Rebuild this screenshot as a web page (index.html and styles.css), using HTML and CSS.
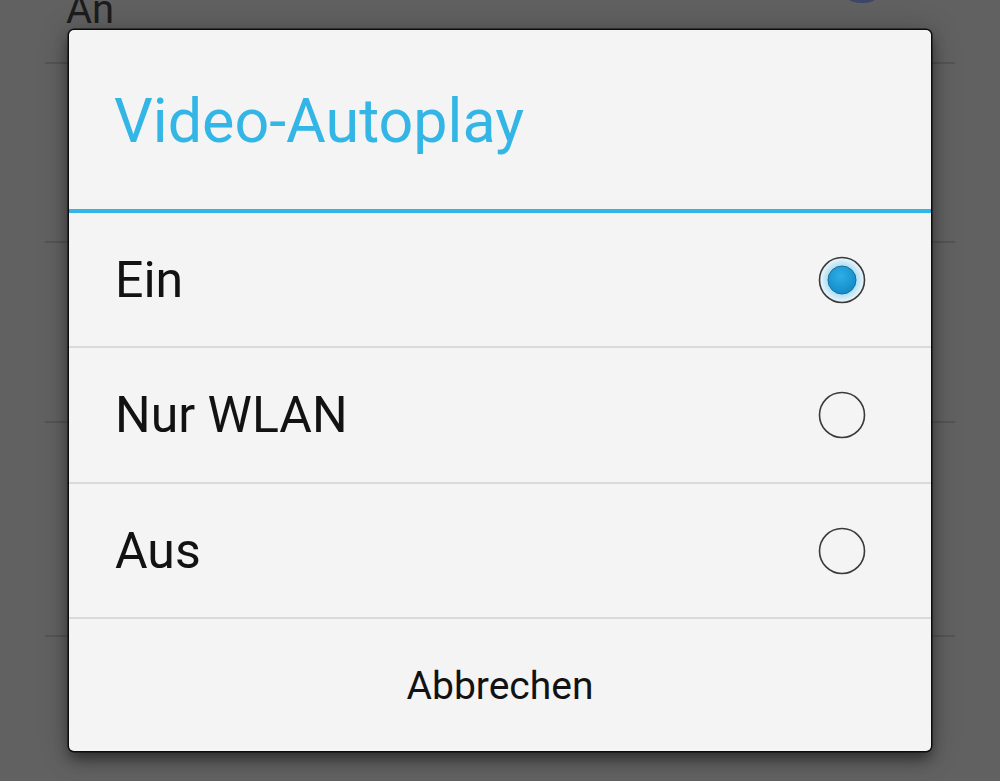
FILE: index.html
```html
<!DOCTYPE html>
<html lang="de">
<head>
    <meta charset="UTF-8">
    <meta name="viewport" content="width=device-width, initial-scale=1.0">
    <title>Video-Autoplay</title>
    <link rel="stylesheet" href="styles.css">
</head>
<body>
    <div class="screen">
        <!-- Einstellungsliste hinter dem Dialog -->
        <div class="settings">
            <div class="setting setting-first">
                <span class="setting-value">An</span>
                <span class="setting-knob"></span>
            </div>
            <div class="setting setting-2"></div>
            <div class="setting setting-3"></div>
            <div class="setting setting-4"></div>
        </div>

        <div class="dialog">
            <div class="dialog-title">Video-Autoplay</div>
            <div class="dialog-options">
                <label class="option">
                    <span class="option-label">Ein</span>
                    <svg class="radio" width="48" height="48" viewBox="0 0 48 48">
                        <defs>
                            <radialGradient id="glow" cx="50%" cy="50%" r="50%">
                                <stop offset="55%" stop-color="#a3d9f1"/>
                                <stop offset="100%" stop-color="#eef8fc"/>
                            </radialGradient>
                            <radialGradient id="dot" cx="45%" cy="35%" r="60%">
                                <stop offset="0%" stop-color="#2eaee6"/>
                                <stop offset="100%" stop-color="#158ecb"/>
                            </radialGradient>
                        </defs>
                        <circle cx="24" cy="24" r="22.5" fill="url(#glow)" stroke="#3a3a3a" stroke-width="1.6"/>
                        <circle cx="24" cy="24" r="14" fill="url(#dot)" stroke="#1a6f9a" stroke-width="1"/>
                    </svg>
                </label>
                <label class="option option-mid">
                    <span class="option-label">Nur WLAN</span>
                    <svg class="radio" width="48" height="48" viewBox="0 0 48 48">
                        <circle cx="24" cy="24" r="22.5" fill="none" stroke="#3a3a3a" stroke-width="1.6"/>
                    </svg>
                </label>
                <label class="option">
                    <span class="option-label">Aus</span>
                    <svg class="radio" width="48" height="48" viewBox="0 0 48 48">
                        <circle cx="24" cy="24" r="22.5" fill="none" stroke="#3a3a3a" stroke-width="1.6"/>
                    </svg>
                </label>
            </div>
            <button type="button" class="dialog-button">Abbrechen</button>
        </div>
    </div>
</body>
</html>
```

FILE: styles.css
```css
body {
    margin: 0;
    background-color: #616161;
    font-family: Roboto, "Noto Sans", sans-serif;
}
.screen {
    position: relative;
    width: 1000px;
    height: 781px;
    overflow: hidden;
}
.settings {
    padding: 0 45px;
}
.setting {
    box-sizing: border-box;
    border-bottom: 2px solid #545454;
    display: flex;
    justify-content: space-between;
}
.setting-first {
    height: 64px;
}
.setting-2 {
    height: 179px;
}
.setting-3 {
    height: 180px;
}
.setting-4 {
    height: 214px;
}
.setting-value {
    margin-left: 21px;
    margin-top: -14px;
    font-size: 40px;
    line-height: 48px;
    color: #1c1c1c;
    height: 40px;
}
.setting-knob {
    width: 26px;
    height: 8px;
    margin-right: 80px;
    margin-top: -5px;
    border-radius: 50%;
    background-color: #3d4668;
}
.dialog {
    position: absolute;
    left: 69px;
    top: 30px;
    width: 862px;
    height: 721px;
    display: flex;
    flex-direction: column;
    background-color: #f4f4f4;
    border-radius: 5px;
    box-shadow: 0 0 0 1.5px #0c0c0c, 0 8px 14px rgba(0, 0, 0, 0.45), 0 2px 30px rgba(0, 0, 0, 0.25);
}
.dialog-title {
    height: 183px;
    box-sizing: border-box;
    border-bottom: 4px solid #33b5e5;
    display: flex;
    align-items: center;
    padding-left: 45px;
    padding-top: 2px;
    font-size: 61px;
    color: #33b5e5;
}
.option {
    height: 135px;
    box-sizing: border-box;
    border-bottom: 2px solid #dadada;
    display: flex;
    align-items: center;
    justify-content: space-between;
    padding: 0 65px 0 46px;
    font-size: 50px;
    color: #121212;
    cursor: pointer;
}
.option-mid {
    height: 136px;
}
.dialog-button {
    flex: 1;
    border: none;
    background: none;
    font-family: inherit;
    font-size: 39px;
    color: #121212;
    padding: 0;
    padding-top: 2px;
    cursor: pointer;
}
```
